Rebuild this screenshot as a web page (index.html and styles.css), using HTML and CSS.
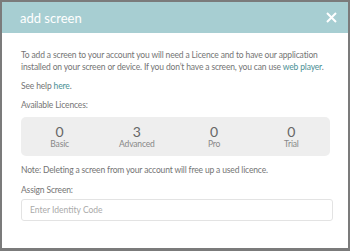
FILE: index.html
```html
<!DOCTYPE html>
<html lang="en">
<head>
	<meta charset="UTF-8">
	<title>add screen</title>
	<link rel="stylesheet" href="styles.css">
</head>
<body>
	<div class="modal">
		<div class="modal-header">
			<span class="modal-title">add screen</span>
			<svg class="close" width="11" height="11" viewBox="0 0 11 11">
				<path d="M1 1 L10 10 M10 1 L1 10" stroke="white" stroke-width="2" />
			</svg>
		</div>
		<div class="modal-body">
			<p class="intro">To add a screen to your account you will need a Licence and to have our application installed on your screen or device. If you don’t have a screen, you can use <a href="#">web player</a>.</p>
			<p class="help">See help <a href="#">here</a>.</p>
			<p class="label">Available Licences:</p>
			<div class="licences">
				<div class="licence"><span class="num">0</span><span class="type">Basic</span></div>
				<div class="licence"><span class="num">3</span><span class="type">Advanced</span></div>
				<div class="licence"><span class="num">0</span><span class="type">Pro</span></div>
				<div class="licence"><span class="num">0</span><span class="type">Trial</span></div>
			</div>
			<p class="note">Note: Deleting a screen from your account will free up a used licence.</p>
			<p class="assign">Assign Screen:</p>
			<input class="input-field" type="text" placeholder="Enter Identity Code">
		</div>
	</div>
</body>
</html>
```

FILE: styles.css
```css
html,
body {
	margin: 0;
	background: #7b7b7b;
	font-family: 'Lato', sans-serif;
}

.modal {
	margin: 2px;
	width: 346px;
	height: 246px;
	background: white;
	box-sizing: border-box;
}

.modal-header {
	height: 31px;
	background: #a7ced2;
	display: flex;
	align-items: center;
	justify-content: space-between;
	padding: 0 11px 0 18px;
}

.modal-title {
	color: white;
	font-size: 13px;
}

.modal-body {
	padding: 16px 14px 0 19px;
	color: #747474;
	font-size: 8.5px;
	letter-spacing: -0.15px;
}

p {
	margin: 0;
	line-height: 12px;
}

.intro,
.help {
	margin-bottom: 7px;
}

a {
	color: #4a8f95;
	text-decoration: none;
}

.licences {
	background: #eeeeee;
	border-radius: 5px;
	height: 39px;
	display: flex;
	justify-content: space-around;
	align-items: center;
	margin: 6px 4px 8px 0;
}

.licence {
	display: flex;
	flex-direction: column;
	align-items: center;
	width: 60px;
}

.num {
	font-size: 14px;
	line-height: 15px;
	color: #666;
	letter-spacing: 0;
}

.type {
	font-size: 8.5px;
	line-height: 11px;
	color: #888;
}

.note {
	margin-bottom: 8px;
}

.assign {
	margin-bottom: 3px;
}

.input-field {
	width: 312px;
	height: 22px;
	box-sizing: border-box;
	border: 1px solid #e3e3e3;
	border-radius: 3px;
	padding: 0 8px;
	font-family: 'Lato', sans-serif;
	font-size: 8.5px;
	margin: 0;
}

.input-field::placeholder {
	color: #aaa;
}
```
